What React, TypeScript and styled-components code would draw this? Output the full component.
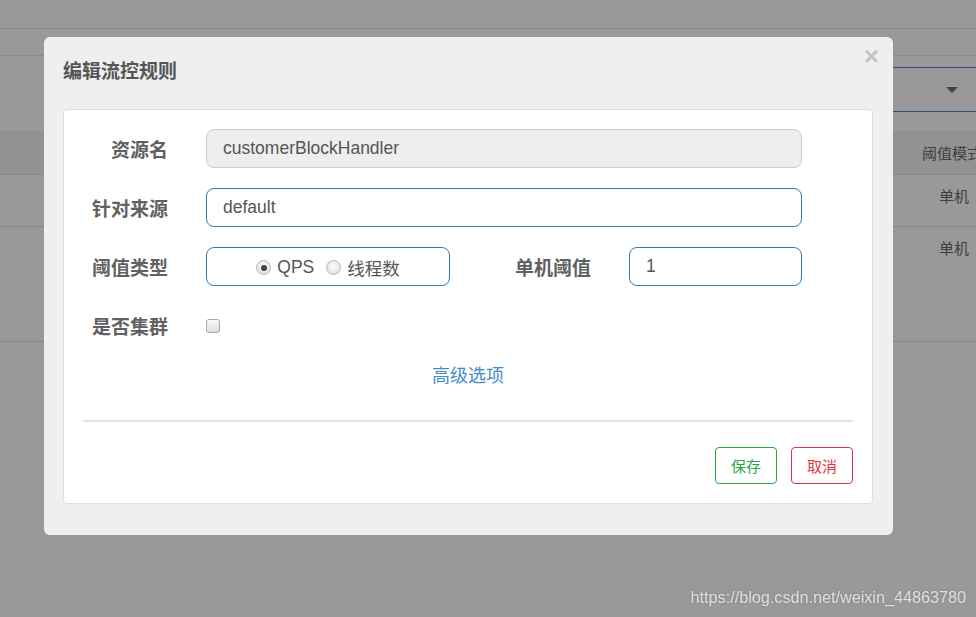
import React from "react";
import styled, { createGlobalStyle } from "styled-components";

const Global = createGlobalStyle`
  html, body { margin: 0; padding: 0; }
  body {
    width: 976px; height: 617px; overflow: hidden;
    background: #999;
    font-family: "Liberation Sans", "Noto Sans CJK SC", sans-serif;
  }
`;

const Page = styled.div`
  position: relative;
  width: 976px;
  height: 617px;
  background: #999;
  overflow: hidden;
`;

const Bar = styled.div<{ $h: number }>`
  height: ${(p) => p.$h}px;
  border-bottom: 1px solid #8b8b8b;
  box-sizing: border-box;
`;

const Toolbar = styled.div`
  display: flex;
  justify-content: flex-end;
  padding-top: 11px;
  height: 75px;
  box-sizing: border-box;
`;

const FakeSelect = styled.div`
  width: 200px;
  height: 45px;
  box-sizing: border-box;
  border-top: 1px solid #2e4f70;
  border-bottom: 1px solid #2e4f70;
  display: flex;
  align-items: center;
  justify-content: flex-end;
  padding-right: 18px;
`;

const Caret = styled.span`
  width: 0; height: 0;
  border-left: 6px solid transparent;
  border-right: 6px solid transparent;
  border-top: 6px solid #444;
  margin-top: 1px;
`;

const TableHead = styled.div`
  height: 44px;
  background: #929292;
  border-bottom: 1px solid #868686;
  box-sizing: border-box;
  display: flex;
  justify-content: flex-end;
  align-items: center;
  overflow: hidden;
`;

const TableRow = styled.div<{ $h: number }>`
  height: ${(p) => p.$h}px;
  border-bottom: 1px solid #868686;
  box-sizing: border-box;
  display: flex;
  justify-content: flex-end;
  align-items: flex-start;
`;

const Cell = styled.div<{ $pt: number; $right: number }>`
  font-family: "Noto Sans CJK SC", sans-serif;
  font-size: 15px;
  color: #3e3e3e;
  padding-top: ${(p) => p.$pt}px;
  margin-right: ${(p) => p.$right}px;
  white-space: nowrap;
`;

const HeadCell = styled.div`
  font-family: "Noto Sans CJK SC", sans-serif;
  font-size: 15px;
  color: #3e3e3e;
  margin-right: -6px;
  white-space: nowrap;
`;

const Modal = styled.div`
  position: absolute;
  left: 44px;
  top: 37px;
  width: 849px;
  height: 498px;
  background: #efefef;
  border-radius: 6px;
  box-sizing: border-box;
  padding: 0 20px 0 19px;
  display: flex;
  flex-direction: column;
`;

const Header = styled.div`
  height: 72px;
  box-sizing: border-box;
  padding-top: 23px;
  position: relative;
`;

const Title = styled.h4`
  margin: 0;
  font-family: "Noto Sans CJK SC", sans-serif;
  font-weight: 700;
  font-size: 19px;
  color: #555;
  line-height: 20px;
`;

const Close = styled.span`
  position: absolute;
  right: -6px;
  top: 6px;
  font-family: "Liberation Sans", sans-serif;
  font-weight: 700;
  font-size: 26px;
  color: #c4c4c4;
  line-height: 1;
`;

const Panel = styled.div`
  background: #fff;
  border: 1px solid #ddd;
  border-radius: 4px;
  padding: 19px 19px 19px 19px;
  display: flex;
  flex-direction: column;
`;

const Row = styled.div<{ $last?: boolean }>`
  display: flex;
  align-items: center;
  height: 39px;
  margin-bottom: ${(p) => (p.$last ? 0 : 20)}px;
`;

const Label = styled.label<{ $w: number }>`
  width: ${(p) => p.$w}px;
  text-align: right;
  padding-right: 38px;
  box-sizing: border-box;
  font-family: "Noto Sans CJK SC", sans-serif;
  font-weight: 700;
  font-size: 19px;
  color: #616161;
  white-space: nowrap;
`;

const Input = styled.div<{ $w: number; $ro?: boolean }>`
  width: ${(p) => p.$w}px;
  height: 39px;
  box-sizing: border-box;
  border: 1px solid ${(p) => (p.$ro ? "#cdcdcd" : "#3877b8")};
  background: ${(p) => (p.$ro ? "#eee" : "#fff")};
  border-radius: 8px;
  padding-left: 16px;
  display: flex;
  align-items: center;
  font-family: "Liberation Sans", sans-serif;
  font-size: 17.5px;
  color: #555;
`;

const RadioBox = styled(Input)`
  padding-left: 0;
  padding-top: 2px;
  justify-content: center;
  gap: 12px;
`;

const RadioItem = styled.span`
  display: inline-flex;
  align-items: center;
  gap: 6px;
`;

const Radio = styled.span<{ $on?: boolean }>`
  width: 15px;
  height: 15px;
  box-sizing: border-box;
  border-radius: 50%;
  border: 1px solid #b8b8b8;
  background: radial-gradient(circle at 50% 40%, #fdfdfd 0%, #d8d8d8 100%);
  display: inline-flex;
  align-items: center;
  justify-content: center;
  &::after {
    content: "";
    display: ${(p) => (p.$on ? "block" : "none")};
    width: 6px;
    height: 6px;
    border-radius: 50%;
    background: #444;
  }
`;

const CnText = styled.span`
  font-family: "Noto Sans CJK SC", sans-serif;
  font-size: 17.5px;
  color: #555;
`;

const Checkbox = styled.span`
  width: 14px;
  height: 14px;
  box-sizing: border-box;
  border: 1px solid #a9a9a9;
  border-radius: 3px;
  background: linear-gradient(#fafafa, #dcdcdc);
`;

const LinkRow = styled.div`
  display: flex;
  justify-content: center;
  margin-top: 10px;
  height: 38px;
  align-items: center;
`;

const Link = styled.a`
  font-family: "Noto Sans CJK SC", sans-serif;
  font-size: 18px;
  color: #428bca;
  text-decoration: none;
  cursor: pointer;
`;

const Divider = styled.hr`
  border: 0;
  border-top: 2px solid #e3e3e3;
  margin: 27px 0 25px 0;
`;

const Footer = styled.div`
  display: flex;
  justify-content: flex-end;
  gap: 14px;
`;

const Btn = styled.button<{ $c: string }>`
  width: 62px;
  height: 37px;
  box-sizing: border-box;
  background: #fff;
  border: 1px solid ${(p) => p.$c};
  color: ${(p) => p.$c};
  border-radius: 4px;
  font-family: "Noto Sans CJK SC", sans-serif;
  font-size: 15px;
  padding: 0;
`;

const Watermark = styled.div`
  position: absolute;
  right: 10px;
  bottom: 10px;
  font-family: "Liberation Sans", sans-serif;
  font-size: 16.2px;
  color: rgba(235, 235, 235, 0.92);
  text-shadow: 0 0 2px rgba(0, 0, 0, 0.25);
`;

export default function App() {
  return (
    <>
      <Global />
      <Page>
        <Bar $h={29} />
        <Bar $h={27} />
        <Toolbar>
          <FakeSelect>
            <Caret />
          </FakeSelect>
        </Toolbar>
        <TableHead>
          <HeadCell>阈值模式</HeadCell>
        </TableHead>
        <TableRow $h={52}>
          <Cell $pt={10} $right={7}>单机</Cell>
        </TableRow>
        <TableRow $h={115}>
          <Cell $pt={10} $right={7}>单机</Cell>
        </TableRow>

        <Modal>
          <Header>
            <Title>编辑流控规则</Title>
            <Close>×</Close>
          </Header>
          <Panel>
            <Row>
              <Label $w={123}>资源名</Label>
              <Input $w={596} $ro>customerBlockHandler</Input>
            </Row>
            <Row>
              <Label $w={123}>针对来源</Label>
              <Input $w={596}>default</Input>
            </Row>
            <Row>
              <Label $w={123}>阈值类型</Label>
              <RadioBox $w={244}>
                <RadioItem>
                  <Radio $on />
                  <span>QPS</span>
                </RadioItem>
                <RadioItem>
                  <Radio />
                  <CnText>线程数</CnText>
                </RadioItem>
              </RadioBox>
              <Label $w={179}>单机阈值</Label>
              <Input $w={173}>1</Input>
            </Row>
            <Row $last>
              <Label $w={123}>是否集群</Label>
              <Checkbox />
            </Row>
            <LinkRow>
              <Link>高级选项</Link>
            </LinkRow>
            <Divider />
            <Footer>
              <Btn $c="#28a745">保存</Btn>
              <Btn $c="#dc3545">取消</Btn>
            </Footer>
          </Panel>
        </Modal>
        <Watermark>https://blog.csdn.net/weixin_44863780</Watermark>
      </Page>
    </>
  );
}
